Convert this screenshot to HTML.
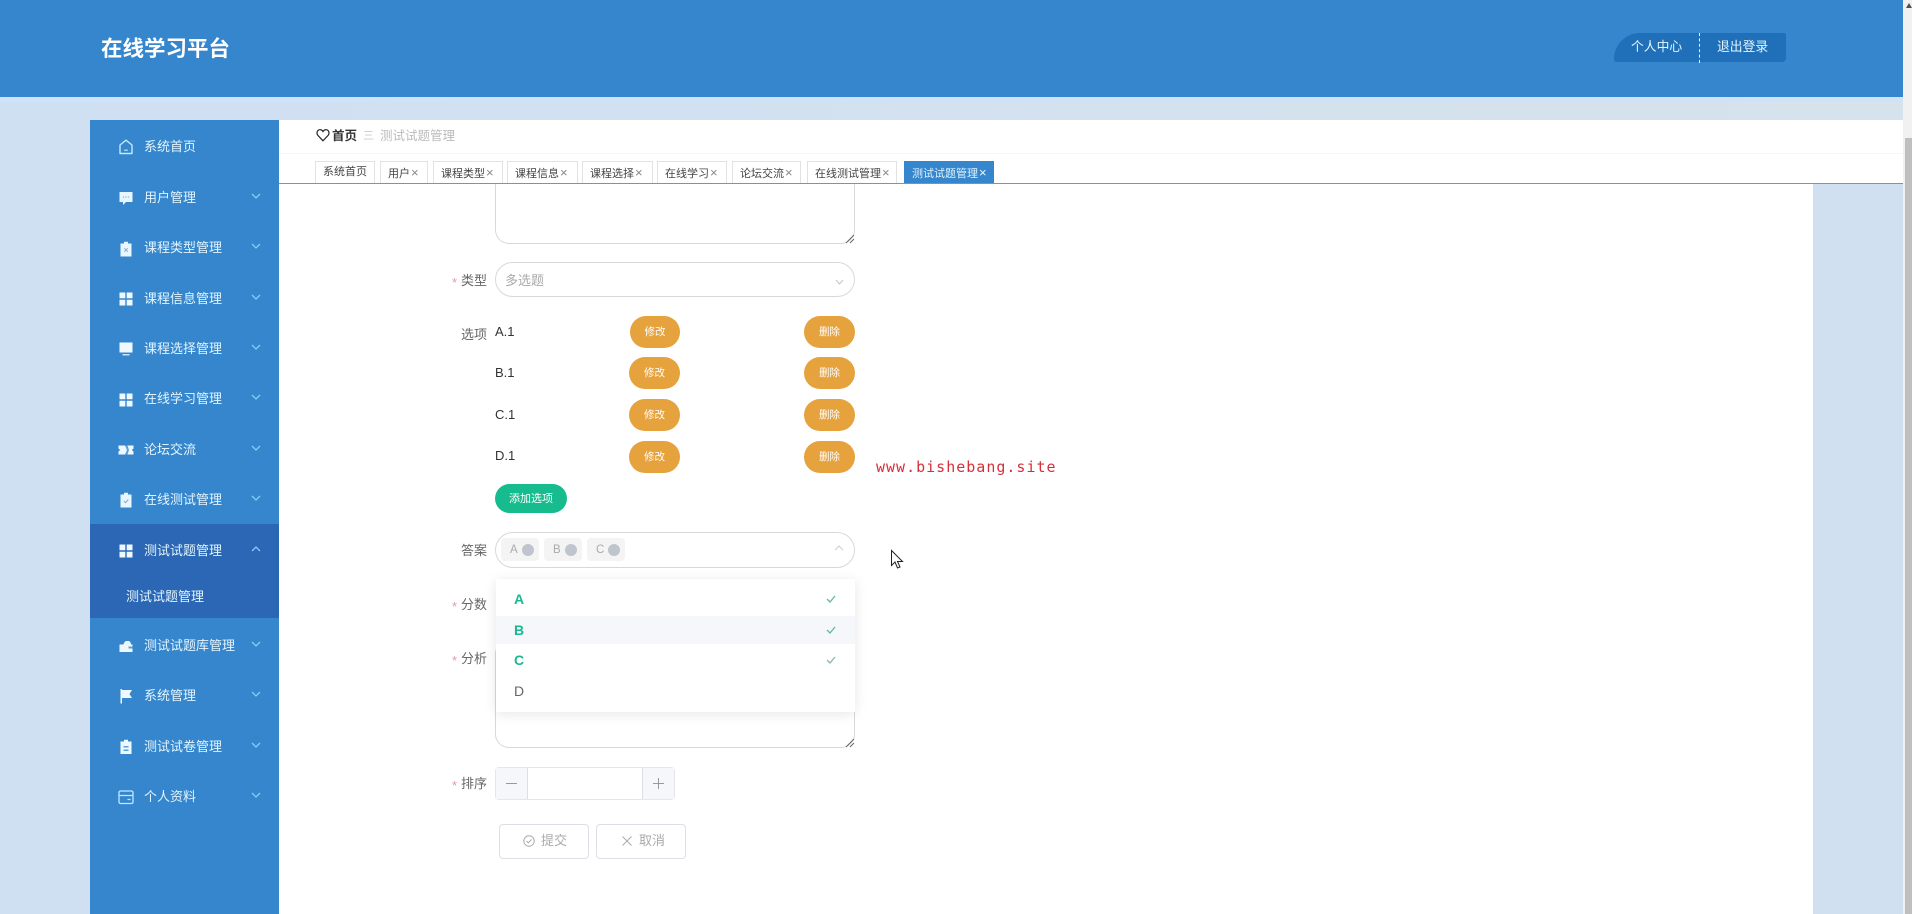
<!DOCTYPE html>
<html lang="zh">
<head>
<meta charset="utf-8">
<title>在线学习平台</title>
<style>
html,body{margin:0;padding:0;width:1912px;height:914px;overflow:hidden}
body{position:relative;background:linear-gradient(90deg,#cfe0f2 0,#d2e1f1 35%,#d6e2ec 100%);font-family:"Liberation Sans","Noto Sans CJK SC",sans-serif;color:#333}
#w{left:0;top:0;width:1912px;height:914px;filter:blur(.35px)}
div,span,svg{position:absolute;box-sizing:border-box}
.t{white-space:nowrap;line-height:20px;height:20px}
.si{font-size:13px;color:#e2f4ff;left:144px;margin-top:1px}
.ic{left:118px;width:16px;height:16px;margin-top:1px}
.ar{left:251px;width:10px;height:6px;margin-top:1px}
.tab{top:161px;height:22px;border:1px solid #e2e2e2;border-bottom:0;background:#fff;font-size:11px;line-height:21px;color:#444;padding-left:7px;white-space:nowrap}
.tab i{font-style:normal;color:#888;font-size:13px;margin-left:1px}
.btn{background:#e6a23c;color:#fff;font-size:10.5px;text-align:center;line-height:32px;height:32px;width:51px;border-radius:16px}
.lab{font-size:13px;color:#666;left:461px;margin-top:1px}
.star{left:452px;font-size:13px;color:#e49aa6;margin-top:1px}
.opt{left:495px;font-size:13px;color:#333}
.tag{top:538px;height:23px;background:#f4f4f5;border-radius:4px;font-size:11.5px;line-height:24px;color:#aaa;padding-left:9px;width:38px}
.tag b{position:absolute;left:21px;top:6px;width:12px;height:12px;border-radius:6px;background:#c0c4cc}
.dd{left:514px;font-size:14px;font-weight:bold;color:#1ab890}
</style>
</head>
<body>
<div id="w">
<!-- header -->
<div style="left:0;top:0;width:1903px;height:97px;background:#3586cc"></div>
<div style="left:0;top:97px;width:1903px;height:5px;background:#cfe2f6"></div>
<div class="t" style="left:101px;top:37px;height:24px;line-height:24px;font-size:21.5px;font-weight:bold;color:#fff">在线学习平台</div>
<div style="left:1614px;top:33px;width:85px;height:29px;background:#1f70b9;border-radius:26px 0 0 3px"></div>
<div style="left:1699px;top:33px;width:87px;height:29px;background:#1f70b9;border-radius:0 2px 4px 0"></div>
<div style="left:1699px;top:33px;width:1px;height:30px;border-left:1px dashed #e8f5ff"></div>
<div class="t" style="left:1631px;top:37px;font-size:12.800px;color:#e6f5ff">个人中心</div>
<div class="t" style="left:1717px;top:37px;font-size:12.800px;color:#e6f5ff">退出登录</div>

<!-- content -->
<div style="left:279px;top:120px;width:1624px;height:63px;background:#fff"></div>
<div style="left:279px;top:153px;width:1624px;height:1px;background:#f6f6f6"></div>
<div style="left:279px;top:184px;width:1534px;height:730px;background:#fff"></div>
<div style="left:1813px;top:184px;width:90px;height:730px;background:#d0e0f0"></div>
<div style="left:279px;top:183px;width:1624px;height:1px;background:#8f8f8f"></div>

<svg style="left:316px;top:128px;width:14px;height:14px" viewBox="0 0 14 14"><path d="M7 12.800 1.900 7.400C.2 5.500 1 2 3.800 1.700 5.200 1.600 6.300 2.300 7 3.500 7.700 2.300 8.800 1.600 10.200 1.700 13 2 13.800 5.500 12.100 7.400Z" fill="none" stroke="#222" stroke-width="1.200"/></svg>
<div class="t" style="left:332px;top:126px;font-size:12.500px;font-weight:bold;color:#333">首页</div>
<div class="t" style="left:363px;top:126px;font-size:11px;color:#ccc">三</div>
<div class="t" style="left:380px;top:126px;font-size:12.500px;color:#bbb">测试试题管理</div>

<div class="tab" style="left:315px;width:60px">系统首页</div>
<div class="tab" style="left:380px;width:48px">用户<i>×</i></div>
<div class="tab" style="left:433px;width:70px">课程类型<i>×</i></div>
<div class="tab" style="left:507px;width:71px">课程信息<i>×</i></div>
<div class="tab" style="left:582px;width:71px">课程选择<i>×</i></div>
<div class="tab" style="left:657px;width:70px">在线学习<i>×</i></div>
<div class="tab" style="left:732px;width:69px">论坛交流<i>×</i></div>
<div class="tab" style="left:807px;width:90px">在线测试管理<i>×</i></div>
<div class="tab" style="left:904px;width:90px;background:#3586cc;border-color:#3586cc;color:#dff3ff">测试试题管理<i style="color:#e6f5ff">×</i></div>

<!-- sidebar -->
<div style="left:90px;top:120px;width:189px;height:794px;background:#3586cc"></div>
<div style="left:90px;top:524px;width:189px;height:94px;background:#2b67b4"></div>

<svg class="ic" style="top:138px" viewBox="0 0 16 16"><path d="M8 1.200 14 6V14.500H2V6Z" fill="none" stroke="#bfe9ff" stroke-width="1.400" stroke-linejoin="round"/><path d="M6.200 11.200H9.800" stroke="#bfe9ff" stroke-width="1.200"/></svg>
<div class="t si" style="top:136px">系统首页</div>

<svg class="ic" style="top:189px" viewBox="0 0 16 16"><path d="M1.500 2H14.500V12H8L5 15V12H1.500Z" fill="#e8f7ff"/><circle cx="5.500" cy="7" r=".8" fill="#8fbfe0"/><circle cx="8" cy="7" r=".8" fill="#8fbfe0"/><circle cx="10.500" cy="7" r=".8" fill="#8fbfe0"/></svg>
<div class="t si" style="top:187px">用户管理</div>
<svg class="ar" style="top:192px" viewBox="0 0 10 6"><path d="M1 1 5 5 9 1" fill="none" stroke="#86cdf5" stroke-width="1.300"/></svg>

<svg class="ic" style="top:240px" viewBox="0 0 16 16"><path d="M6 .8H10V2.500H13.500V15.500H2.500V2.500H6Z" fill="#e8f7ff"/><path d="M6.300 7.300 9.700 10.700M9.700 7.300 6.300 10.700" stroke="#8fa8bd" stroke-width="1"/></svg>
<div class="t si" style="top:237px">课程类型管理</div>
<svg class="ar" style="top:242px" viewBox="0 0 10 6"><path d="M1 1 5 5 9 1" fill="none" stroke="#86cdf5" stroke-width="1.300"/></svg>

<svg class="ic" style="top:290px" viewBox="0 0 16 16"><path d="M1.500 1.500H7.300V7.300H1.500ZM8.700 1.500H14.500V7.300H8.700ZM1.500 8.700H7.300V14.500H1.500ZM8.700 8.700H14.500V14.500H8.700Z" fill="#eef9ff"/></svg>
<div class="t si" style="top:288px">课程信息管理</div>
<svg class="ar" style="top:293px" viewBox="0 0 10 6"><path d="M1 1 5 5 9 1" fill="none" stroke="#86cdf5" stroke-width="1.300"/></svg>

<svg class="ic" style="top:340px" viewBox="0 0 16 16"><path d="M1.500 1.500H14.500V11.500H1.500Z" fill="#eef9ff"/><path d="M4.500 13.800H11.500" stroke="#eef9ff" stroke-width="1.200"/></svg>
<div class="t si" style="top:338px">课程选择管理</div>
<svg class="ar" style="top:343px" viewBox="0 0 10 6"><path d="M1 1 5 5 9 1" fill="none" stroke="#86cdf5" stroke-width="1.300"/></svg>

<svg class="ic" style="top:391px" viewBox="0 0 16 16"><path d="M1.500 1.500H7.300V7.300H1.500ZM8.700 1.500H14.500V7.300H8.700ZM1.500 8.700H7.300V14.500H1.500ZM8.700 8.700H14.500V14.500H8.700Z" fill="#eef9ff"/></svg>
<div class="t si" style="top:388px">在线学习管理</div>
<svg class="ar" style="top:393px" viewBox="0 0 10 6"><path d="M1 1 5 5 9 1" fill="none" stroke="#86cdf5" stroke-width="1.300"/></svg>

<svg class="ic" style="top:441px" viewBox="0 0 16 16"><path d="M.5 3.500H15.500V6.500L13.800 8 15.500 9.500V12.500H.5V9.500L2.200 8 .5 6.500Z" fill="#eef9ff"/><path d="M7 3.500 9 8 7 12.500H9.500L11 8 9.500 3.500Z" fill="#5e9fd6"/></svg>
<div class="t si" style="top:439px">论坛交流</div>
<svg class="ar" style="top:444px" viewBox="0 0 10 6"><path d="M1 1 5 5 9 1" fill="none" stroke="#86cdf5" stroke-width="1.300"/></svg>

<svg class="ic" style="top:491px" viewBox="0 0 16 16"><path d="M6 .8H10V2.500H13.500V15.500H2.500V2.500H6Z" fill="#e8f7ff"/><path d="M5.800 9 7.500 10.800 10.300 7.500" fill="none" stroke="#8fa8bd" stroke-width="1"/></svg>
<div class="t si" style="top:489px">在线测试管理</div>
<svg class="ar" style="top:494px" viewBox="0 0 10 6"><path d="M1 1 5 5 9 1" fill="none" stroke="#86cdf5" stroke-width="1.300"/></svg>

<svg class="ic" style="top:542px" viewBox="0 0 16 16"><path d="M1.500 1.500H7.300V7.300H1.500ZM8.700 1.500H14.500V7.300H8.700ZM1.500 8.700H7.300V14.500H1.500ZM8.700 8.700H14.500V14.500H8.700Z" fill="#eef9ff"/></svg>
<div class="t si" style="top:540px">测试试题管理</div>
<svg class="ar" style="top:545px" viewBox="0 0 10 6"><path d="M1 5 5 1 9 5" fill="none" stroke="#86cdf5" stroke-width="1.300"/></svg>
<div class="t si" style="left:126px;top:586px">测试试题管理</div>

<svg class="ic" style="top:637px" viewBox="0 0 16 16"><path d="M1.500 6.500H5.500C6 4.500 7 3 8.500 3H10.500C12 3 12.800 4.500 13 6.500H14.500V14H1.500Z" fill="#eef9ff"/><rect x="10.500" y="8.500" width="4" height="2" fill="#5e9fd6"/></svg>
<div class="t si" style="top:635px">测试试题库管理</div>
<svg class="ar" style="top:640px" viewBox="0 0 10 6"><path d="M1 1 5 5 9 1" fill="none" stroke="#86cdf5" stroke-width="1.300"/></svg>

<svg class="ic" style="top:687px" viewBox="0 0 16 16"><path d="M2.500 1H4V15.500H2.500Z" fill="#eef9ff"/><path d="M4 2H14L11.500 6 14 10H4Z" fill="#eef9ff"/></svg>
<div class="t si" style="top:685px">系统管理</div>
<svg class="ar" style="top:690px" viewBox="0 0 10 6"><path d="M1 1 5 5 9 1" fill="none" stroke="#86cdf5" stroke-width="1.300"/></svg>

<svg class="ic" style="top:738px" viewBox="0 0 16 16"><path d="M6 .8H10V2.500H13.500V15H2.500V2.500H6Z" fill="#eef9ff"/><path d="M5.500 7H10.500V8.500H5.500ZM5.500 10.500H10.500V12H5.500Z" fill="#5e9fd6"/></svg>
<div class="t si" style="top:736px">测试试卷管理</div>
<svg class="ar" style="top:741px" viewBox="0 0 10 6"><path d="M1 1 5 5 9 1" fill="none" stroke="#86cdf5" stroke-width="1.300"/></svg>

<svg class="ic" style="top:788px" viewBox="0 0 16 16"><rect x="1" y="2" width="14" height="12.500" rx="1.500" fill="none" stroke="#bfe9ff" stroke-width="1.300"/><path d="M1 6.500H15M9.500 10.500H12.500" stroke="#bfe9ff" stroke-width="1.200"/></svg>
<div class="t si" style="top:786px">个人资料</div>
<svg class="ar" style="top:791px" viewBox="0 0 10 6"><path d="M1 1 5 5 9 1" fill="none" stroke="#86cdf5" stroke-width="1.300"/></svg>

<!-- top textarea -->
<div style="left:495px;top:184px;width:360px;height:60px;border:1px solid #d8d8d8;border-top:0;border-radius:0 0 14px 14px;background:#fff"></div>
<svg style="left:845px;top:234px;width:10px;height:10px" viewBox="0 0 10 10"><path d="M1 9 9 1M5 9 9 5" stroke="#666" stroke-width="1"/></svg>

<!-- type -->
<div class="t star" style="top:272px">*</div>
<div class="t lab" style="top:270px">类型</div>
<div style="left:495px;top:262px;width:360px;height:35px;border:1px solid #d8d8d8;border-radius:18px"></div>
<div class="t" style="left:505px;top:271px;font-size:13px;color:#aaa">多选题</div>
<svg style="left:835px;top:279px;width:9px;height:6px" viewBox="0 0 9 6"><path d="M1 1 4.500 5 8 1" fill="none" stroke="#c0c4cc" stroke-width="1"/></svg>

<!-- options -->
<div class="t lab" style="top:324px">选项</div>
<div class="t opt" style="top:322px">A.1</div>
<div class="t opt" style="top:363px">B.1</div>
<div class="t opt" style="top:405px">C.1</div>
<div class="t opt" style="top:446px">D.1</div>
<div class="btn" style="left:630px;top:316px;width:50px">修改</div>
<div class="btn" style="left:804px;top:316px">删除</div>
<div class="btn" style="left:629px;top:357px">修改</div>
<div class="btn" style="left:804px;top:357px">删除</div>
<div class="btn" style="left:629px;top:399px">修改</div>
<div class="btn" style="left:804px;top:399px">删除</div>
<div class="btn" style="left:629px;top:441px">修改</div>
<div class="btn" style="left:804px;top:441px">删除</div>
<div style="left:495px;top:484px;width:72px;height:29px;border-radius:15px;background:#16bb8e;color:#fff;font-size:11px;line-height:30px;text-align:center">添加选项</div>

<div class="t" style="left:876px;top:457px;font-family:'DejaVu Sans Mono',monospace;font-size:15px;letter-spacing:1px;color:#d4303a">www.bishebang.site</div>

<!-- answer -->
<div class="t lab" style="top:540px">答案</div>
<div style="left:495px;top:532px;width:360px;height:36px;border:1px solid #d8d8d8;border-radius:18px"></div>
<div class="tag" style="left:501px">A<b></b></div>
<div class="tag" style="left:544px">B<b></b></div>
<div class="tag" style="left:587px">C<b></b></div>
<svg style="left:834px;top:545px;width:10px;height:6px" viewBox="0 0 10 6"><path d="M1 5 5 1 9 5" fill="none" stroke="#c8ccd2" stroke-width="1"/></svg>

<div class="t star" style="top:596px">*</div>
<div class="t lab" style="top:594px">分数</div>
<div class="t star" style="top:650px">*</div>
<div class="t lab" style="top:648px">分析</div>

<!-- analysis textarea -->
<div style="left:495px;top:640px;width:360px;height:108px;border:1px solid #d8d8d8;border-radius:14px;background:#fff"></div>
<svg style="left:845px;top:738px;width:10px;height:10px" viewBox="0 0 10 10"><path d="M1 9 9 1M5 9 9 5" stroke="#666" stroke-width="1"/></svg>

<!-- dropdown -->
<div style="left:496px;top:579px;width:359px;height:133px;background:#fff;box-shadow:0 2px 12px rgba(0,0,0,.1)"></div>
<div style="left:496px;top:616px;width:359px;height:28px;background:#f5f7fa"></div>
<div class="t dd" style="top:589px">A</div>
<div class="t dd" style="top:620px">B</div>
<div class="t dd" style="top:650px">C</div>
<div class="t" style="left:514px;top:681px;font-size:14px;color:#666">D</div>
<svg style="left:826px;top:595px;width:10px;height:8px" viewBox="0 0 10 8"><path d="M1 4 4 7 9 1" fill="none" stroke="#62b8a0" stroke-width="1.300"/></svg>
<svg style="left:826px;top:626px;width:10px;height:8px" viewBox="0 0 10 8"><path d="M1 4 4 7 9 1" fill="none" stroke="#62b8a0" stroke-width="1.300"/></svg>
<svg style="left:826px;top:656px;width:10px;height:8px" viewBox="0 0 10 8"><path d="M1 4 4 7 9 1" fill="none" stroke="#8fb5a8" stroke-width="1.300"/></svg>

<!-- number -->
<div class="t star" style="top:775px">*</div>
<div class="t lab" style="top:773px">排序</div>
<div style="left:495px;top:767px;width:180px;height:33px;border:1px solid #e4e6ea;border-radius:4px"></div>
<div style="left:496px;top:768px;width:32px;height:31px;background:#f5f7fa;border-right:1px solid #dcdfe6"></div>
<div style="left:642px;top:768px;width:32px;height:31px;background:#f5f7fa;border-left:1px solid #dcdfe6"></div>
<div style="left:506px;top:783px;width:11px;height:1px;background:#999"></div>
<div style="left:653px;top:783px;width:11px;height:1px;background:#999"></div>
<div style="left:658px;top:778px;width:1px;height:11px;background:#999"></div>

<!-- form buttons -->
<div style="left:499px;top:824px;width:90px;height:35px;border:1px solid #dcdfe6;border-radius:4px"></div>
<svg style="left:523px;top:835px;width:12px;height:12px" viewBox="0 0 12 12"><circle cx="6" cy="6" r="5.200" fill="none" stroke="#aaa" stroke-width="1"/><path d="M3.500 6 5.300 7.800 8.500 4.500" fill="none" stroke="#aaa" stroke-width="1"/></svg>
<div class="t" style="left:541px;top:831px;font-size:13px;color:#aaa">提交</div>
<div style="left:596px;top:824px;width:90px;height:35px;border:1px solid #dcdfe6;border-radius:4px"></div>
<svg style="left:622px;top:836px;width:10px;height:10px" viewBox="0 0 10 10"><path d="M.5 .5 9.500 9.500M9.500 .5 .5 9.500" stroke="#aaa" stroke-width="1"/></svg>
<div class="t" style="left:639px;top:831px;font-size:13px;color:#aaa">取消</div>

<!-- cursor -->
<svg style="left:890px;top:549px;width:14px;height:21px" viewBox="0 0 14 21"><path d="M1.500 1.500V16.500L5 13 7.500 19 10 18 7.500 12.500H12.500Z" fill="#fff" stroke="#222" stroke-width="1"/></svg>

<!-- scrollbar -->
<div style="left:1903px;top:0;width:9px;height:914px;background:#f1f1f1"></div>
<div style="left:1905px;top:138px;width:7px;height:776px;background:#bfbfbf"></div>
<svg style="left:1906px;top:3px;width:6px;height:5px" viewBox="0 0 6 5"><path d="M3 0 6 5H0Z" fill="#505050"/></svg>
</div>
</body>
</html>
